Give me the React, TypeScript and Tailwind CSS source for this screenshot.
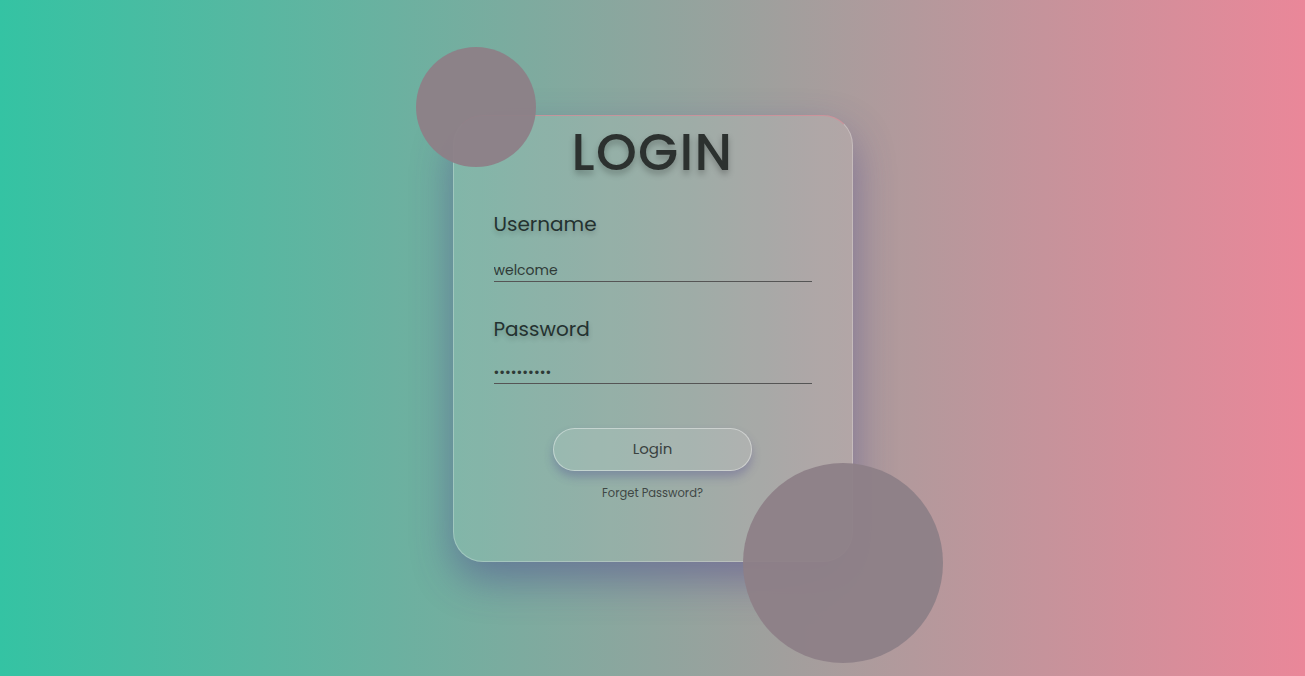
import React from 'react'

const App = () => {
    return (
        <div className="min-h-screen w-full flex items-center justify-center bg-[linear-gradient(to_right,#34c3a3,#ea8799)] font-['Poppins','Open_Sans',sans-serif] overflow-hidden">
            <div className="relative w-[400px] h-[447px]">
                {/* card */}
                <div className="w-full h-full rounded-[30px] bg-white/10 border border-white/25 border-t-[#d98a98]/70 shadow-[0_18px_40px_rgba(70,60,140,0.45)] flex flex-col px-10">
                    <h1 className="text-center text-[52px] leading-none font-medium tracking-wide text-[#2c312f] mt-[10px] [text-shadow:0_4px_6px_rgba(0,0,0,0.25)]">
                        LOGIN
                    </h1>
                    <label className="mt-[36px] text-[20px] leading-none text-[#243230] [text-shadow:0_3px_5px_rgba(0,0,0,0.2)]">
                        Username
                    </label>
                    <input
                        defaultValue="welcome"
                        className="mt-[26px] bg-transparent outline-none border-b border-[#555] text-[14px] leading-none text-[#2f3a37]"
                    />
                    <label className="mt-[37px] text-[20px] leading-none text-[#243230] [text-shadow:0_3px_5px_rgba(0,0,0,0.2)]">
                        Password
                    </label>
                    <input
                        type="password"
                        defaultValue="1234567890"
                        className="mt-[23px] bg-transparent outline-none border-b border-[#555] text-[14px] leading-none text-[#2f3a37]"
                    />
                    <button className="mx-auto mt-[44px] w-[199px] h-[43px] rounded-full bg-white/10 border border-white/40 shadow-[0_6px_10px_rgba(70,60,140,0.3)] text-[15px] text-[#3a4240]">
                        Login
                    </button>
                    <p className="mt-[14px] text-center text-[11.5px] text-[#3f4745]">Forget Password?</p>
                </div>
                {/* decorative circles */}
                <div className="absolute -left-[37px] -top-[68px] w-[120px] h-[120px] rounded-full bg-[#8d7f87]/95"></div>
                <div className="absolute left-[290px] top-[348px] w-[200px] h-[200px] rounded-full bg-[#8d7f87]/95"></div>
            </div>
        </div>
    )
}

export default App
